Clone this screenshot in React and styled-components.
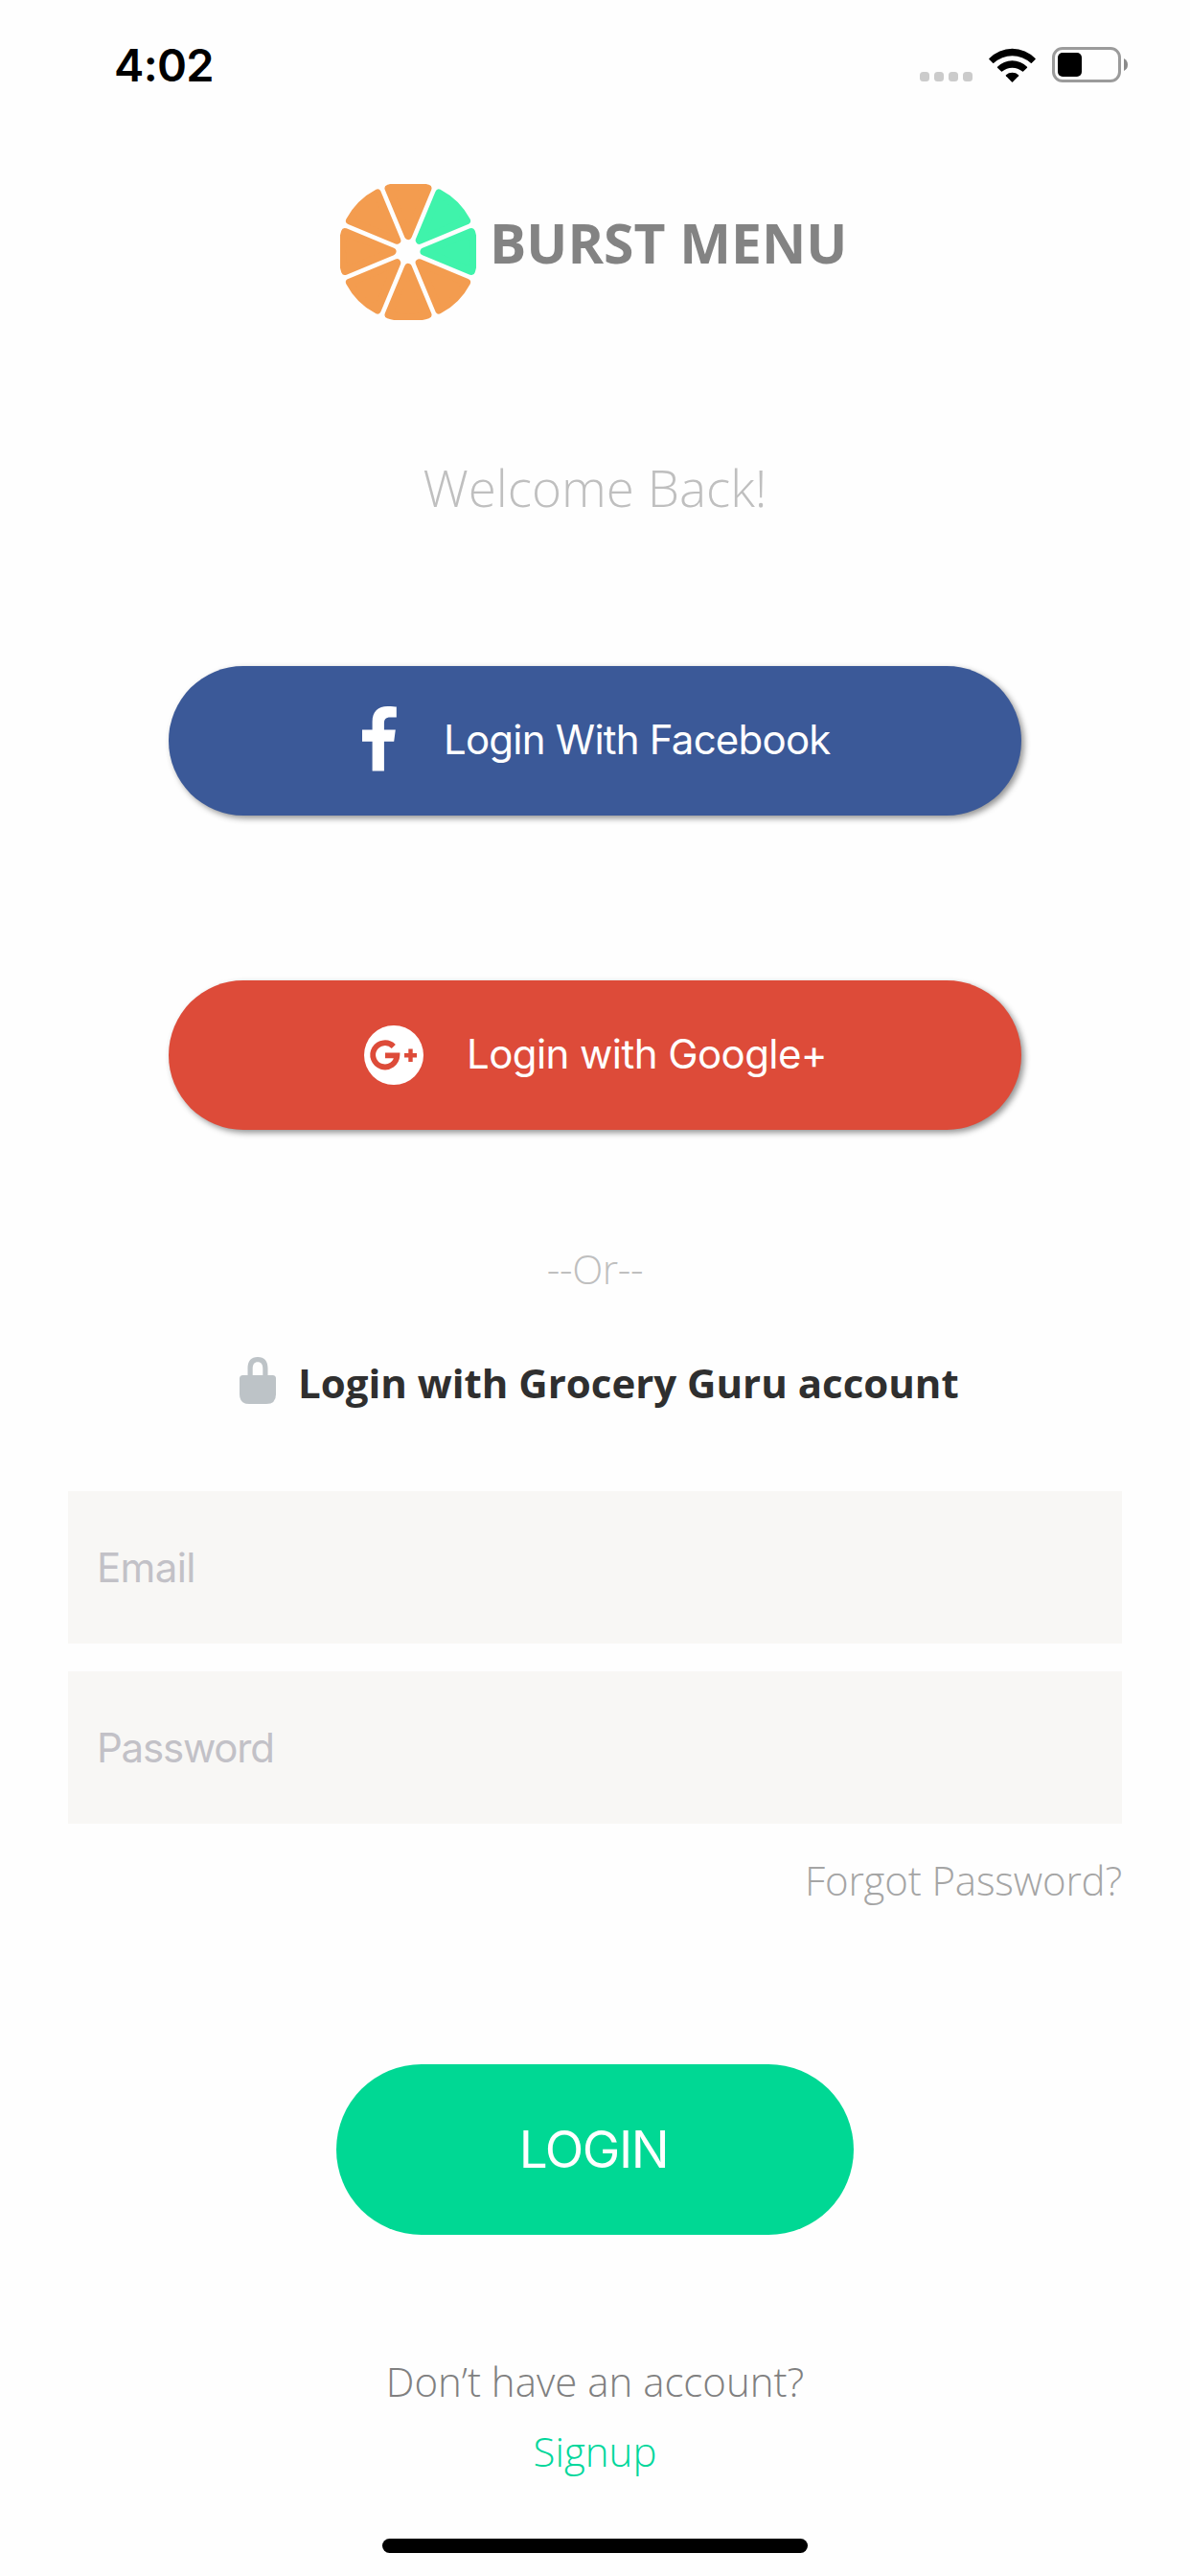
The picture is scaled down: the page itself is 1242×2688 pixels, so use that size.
import React from 'react';
import styled, { createGlobalStyle } from 'styled-components';

const system = '"Inter", "Liberation Sans", sans-serif';
const brand = '"Open Sans", "Noto Sans", sans-serif';

const GlobalStyle = createGlobalStyle`
  *, *::before, *::after { box-sizing: border-box; }
  body { margin: 0; background: #fefefe; }
  button, input { font: inherit; border: 0; padding: 0; margin: 0; outline: none; }
  svg { display: block; flex: none; }
`;

const Screen = styled.main`
  display: flex;
  flex-direction: column;
  width: 1242px;
  height: 2688px;
  overflow: hidden;
  background: #fefefe;
  font-family: ${brand};
`;

const StatusBar = styled.header`
  display: flex;
  align-items: center;
  justify-content: space-between;
  height: 135px;
  padding: 0 65px 0 119px;
`;

const Clock = styled.time`
  font: 600 47px/60px ${system};
  letter-spacing: -0.67px;
  color: #000;
`;

const StatusIcons = styled.div`
  display: flex;
  align-items: center;
  gap: 17px;
`;

const Signal = styled.div`
  display: flex;
  gap: 5px;
  margin-top: 25px;
`;

const SignalDot = styled.span`
  width: 10px;
  height: 10px;
  border-radius: 3.5px;
  background: #cbcbcb;
`;

const BrandRow = styled.div`
  display: flex;
  align-items: flex-start;
  gap: 14px;
  margin-top: 57px;
  padding-left: 355px;
`;

const BrandName = styled.h1`
  margin: 0;
  font-size: 57px;
  font-weight: 700;
  line-height: 122px;
  color: #838383;
`;

const Welcome = styled.p`
  margin: 137px 0 0;
  font-size: 53px;
  font-weight: 300;
  line-height: 75px;
  text-align: center;
  color: #bfbfbf;
`;

const SocialButtons = styled.div`
  display: flex;
  flex-direction: column;
  align-items: center;
  gap: 172px;
  margin-top: 149px;
`;

const SocialButton = styled.button`
  display: flex;
  align-items: center;
  gap: ${(p) => p.$gap}px;
  width: 890px;
  height: 156px;
  padding-left: ${(p) => p.$indent}px;
  border-radius: 78px;
  background: ${(p) => p.$color};
  box-shadow: 3px 3px 6px rgba(0, 0, 0, 0.42);
  color: #fff;
`;

const SocialLabel = styled.span`
  margin-bottom: 2px;
  font: 400 42px/52px ${system};
  letter-spacing: ${(p) => p.$tracking}px;
  white-space: nowrap;
`;

const IconLift = styled.span`
  padding-bottom: ${(p) => p.$by}px;
`;

const Divider = styled.p`
  margin: 116px 0 0;
  font-size: 42px;
  font-weight: 300;
  line-height: 58px;
  letter-spacing: -0.35px;
  text-align: center;
  color: #bfbfbf;
`;

const AccountHeading = styled.div`
  display: flex;
  align-items: center;
  gap: 23px;
  height: 58px;
  margin-top: 61px;
  padding-left: 250px;
`;

const AccountTitle = styled.h2`
  margin: 0;
  font-size: 42px;
  font-weight: 700;
  line-height: 58px;
  white-space: nowrap;
  color: #2f2f2f;
`;

const Form = styled.form`
  display: flex;
  flex-direction: column;
  margin: 84px 71px 0;
`;

const Field = styled.input`
  width: 100%;
  height: 159px;
  padding: 0 30px;
  border-radius: 0;
  background: #f8f7f5;
  font: 400 42px/52px ${system};
  letter-spacing: ${(p) => p.$tracking}px;
  & + & { margin-top: 29px; }
  &::placeholder { color: #c2c1c7; opacity: 1; }
`;

const ForgotLink = styled.a`
  align-self: flex-end;
  margin-top: 30px;
  font-size: 42px;
  font-weight: 300;
  line-height: 58px;
  letter-spacing: -0.15px;
  color: #a5a5a5;
`;

const LoginButton = styled.button`
  align-self: center;
  width: 540px;
  height: 178px;
  margin-top: 163px;
  padding-right: 3px;
  border-radius: 89px;
  background: #00d894;
  font: 400 53px/64px ${system};
  letter-spacing: -1.4px;
  color: #fff;
`;

const Footer = styled.footer`
  display: flex;
  flex-direction: column;
  align-items: center;
  margin-top: 116px;
`;

const FooterLine = styled.span`
  font-size: 42px;
  font-weight: 300;
  line-height: 73px;
  color: ${(p) => (p.$accent ? '#00d79b' : '#808080')};
`;

const HomeIndicator = styled.div`
  align-self: center;
  width: 444px;
  height: 15px;
  margin-top: 55px;
  border-radius: 8px;
  background: #000;
`;

const WEDGE = 'M0-16.5L-20.46-65.9A69 69 0 0 1 20.46-65.9Z';

const CitrusLogo = () => (
  <svg width="142" height="142" viewBox="0 0 142 142">
    <g transform="translate(71 70.5)" strokeWidth="8" strokeLinejoin="round">
      {[0, 45, 90, 135, 180, 225, 270, 315].map((angle) => {
        const color = angle === 45 || angle === 90 ? '#3ff3ab' : '#f39c4f';
        return <path key={angle} d={WEDGE} transform={`rotate(${angle})`} fill={color} stroke={color} />;
      })}
    </g>
  </svg>
);

const WifiIcon = () => (
  <svg width="49" height="36" viewBox="0 0 49 36">
    <path d="M0.4 11A33.5 33.5 0 0 1 48.6 11Q49 11.5 48.6 12L44.8 15.8Q44.3 16.2 43.8 15.8A28.6 28.6 0 0 0 5.2 15.8Q4.7 16.2 4.2 15.8L0.4 12Q0 11.5 0.4 11Z" />
    <path d="M9 19.7A22 22 0 0 1 40 19.7Q40.4 20.2 40 20.7L36 24.6Q35.5 25 35 24.6A16 16 0 0 0 14 24.6Q13.5 25 13 24.6L9 20.7Q8.6 20.2 9 19.7Z" />
    <path d="M17.9 28.2A10 10 0 0 1 31.1 28.2Q31.5 28.7 31.1 29.2L25 35.5Q24.5 36 24 35.5L17.9 29.2Q17.5 28.7 17.9 28.2Z" />
  </svg>
);

const BatteryIcon = () => (
  <svg width="79" height="37" viewBox="0 0 79 37">
    <rect x="1.5" y="1.5" width="69" height="34" rx="9.5" fill="none" stroke="#9b9b9b" strokeWidth="3" />
    <rect x="6" y="6" width="25" height="25" rx="5" />
    <path d="M75 12Q79 14 79 18.5T75 25Z" fill="#8a8a8a" />
  </svg>
);

const FacebookIcon = () => (
  <svg width="36" height="68" viewBox="0 0 36 68" fill="#fff">
    <path d="M10.6 67.5V36.7H0V24.4H10.6V16C10.6 5.5 16.8 0 26.5 0C31 0 34.5.3 35.8.6V11.4H29.6C24 11.4 22.9 14 22.9 17.9V24.4H34.8L33.2 36.7H22.9V67.5Z" />
  </svg>
);

const GooglePlusIcon = () => (
  <svg width="62" height="62" viewBox="0 0 62 62">
    <circle cx="31" cy="31" r="31" fill="#fff" />
    <g fill="none" stroke="#dd4b39">
      <path d="M30.8 22A12.6 12.6 0 1 0 34.4 31.4H22" strokeWidth="5.8" />
      <path d="M42 31.2H55M48.5 24.4V38" strokeWidth="4.4" />
    </g>
  </svg>
);

const LockIcon = () => (
  <svg width="38" height="49" viewBox="0 0 38 49" fill="#bdc3c7">
    <path d="M8.5 20V12C8.5 4 12 0 19 0S29.5 4 29.5 12V20H24.3V12.5C24.3 7.5 22.5 5.3 19 5.3S13.7 7.5 13.7 12.5V20Z" />
    <path d="M3.5 19H34.5Q38 19 38 22.5V39Q38 49 28 49H10Q0 49 0 39V22.5Q0 19 3.5 19Z" />
  </svg>
);

export default function App() {
  return (
    <Screen>
      <GlobalStyle />
      <StatusBar>
        <Clock>4:02</Clock>
        <StatusIcons>
          <Signal>
            <SignalDot />
            <SignalDot />
            <SignalDot />
            <SignalDot />
          </Signal>
          <WifiIcon />
          <BatteryIcon />
        </StatusIcons>
      </StatusBar>

      <BrandRow>
        <CitrusLogo />
        <BrandName>BURST MENU</BrandName>
      </BrandRow>
      <Welcome>Welcome Back!</Welcome>

      <SocialButtons>
        <SocialButton type="button" $color="#3b5998" $indent={202} $gap={49}>
          <IconLift $by={5}><FacebookIcon /></IconLift>
          <SocialLabel $tracking={-0.78}>Login With Facebook</SocialLabel>
        </SocialButton>
        <SocialButton type="button" $color="#dd4b39" $indent={204} $gap={45}>
          <GooglePlusIcon />
          <SocialLabel $tracking={-0.57}>Login with Google+</SocialLabel>
        </SocialButton>
      </SocialButtons>

      <Divider>--Or--</Divider>
      <AccountHeading>
        <IconLift $by={5}><LockIcon /></IconLift>
        <AccountTitle>Login with Grocery Guru account</AccountTitle>
      </AccountHeading>

      <Form>
        <Field type="email" placeholder="Email" $tracking={-0.65} />
        <Field type="password" placeholder="Password" $tracking={-1.2} />
        <ForgotLink>Forgot Password?</ForgotLink>
        <LoginButton type="button">LOGIN</LoginButton>
      </Form>

      <Footer>
        <FooterLine>Don’t have an account?</FooterLine>
        <FooterLine $accent>Signup</FooterLine>
      </Footer>
      <HomeIndicator />
    </Screen>
  );
}
